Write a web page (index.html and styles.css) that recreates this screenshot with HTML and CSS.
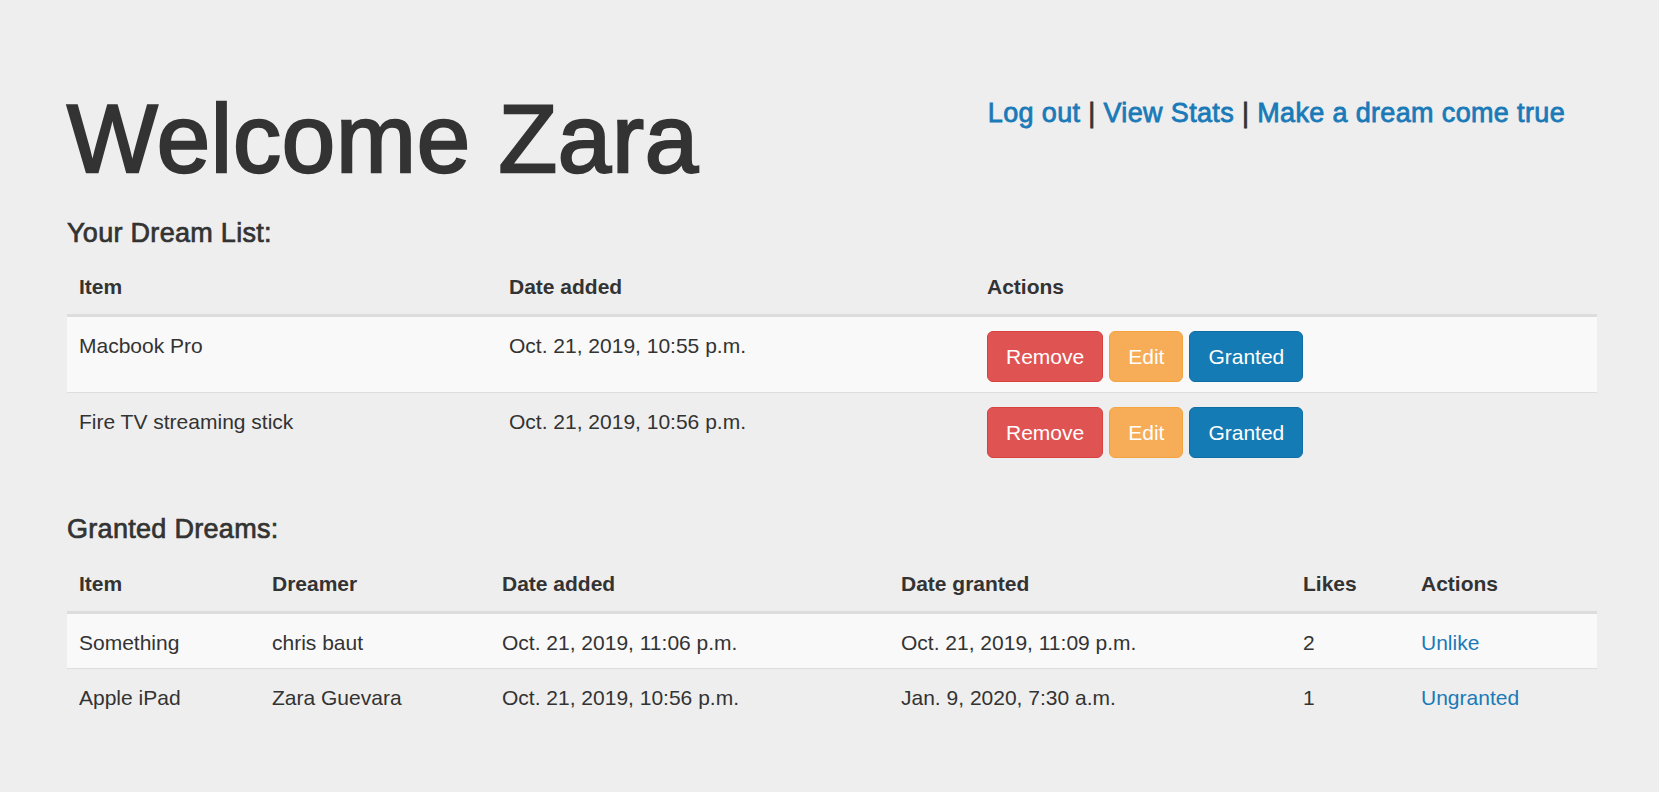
FILE: index.html
```html
<!DOCTYPE html>
<html lang="en">
<head>
<meta charset="utf-8">
<title>Dreams</title>
<link rel="stylesheet" href="styles.css">
</head>
<body>
<div class="page">
  <header class="top">
    <h1 class="title">Welcome Zara</h1>
    <nav class="links">
      <a href="#">Log out</a> <span class="sep">|</span> <a href="#">View Stats</a> <span class="sep">|</span> <a href="#">Make a dream come true</a>
    </nav>
  </header>

  <h4 class="section-title">Your Dream List:</h4>
  <table class="table">
    <colgroup>
      <col class="w-430">
      <col class="w-478">
      <col>
    </colgroup>
    <thead>
      <tr><th>Item</th><th>Date added</th><th>Actions</th></tr>
    </thead>
    <tbody>
      <tr>
        <td>Macbook Pro</td>
        <td>Oct. 21, 2019, 10:55 p.m.</td>
        <td>
          <div class="actions">
            <a href="#" class="btn btn-danger">Remove</a>
            <a href="#" class="btn btn-warning">Edit</a>
            <a href="#" class="btn btn-primary">Granted</a>
          </div>
        </td>
      </tr>
      <tr>
        <td>Fire TV streaming stick</td>
        <td>Oct. 21, 2019, 10:56 p.m.</td>
        <td>
          <div class="actions">
            <a href="#" class="btn btn-danger">Remove</a>
            <a href="#" class="btn btn-warning">Edit</a>
            <a href="#" class="btn btn-primary">Granted</a>
          </div>
        </td>
      </tr>
    </tbody>
  </table>

  <h4 class="section-title section-title-next">Granted Dreams:</h4>
  <table class="table">
    <colgroup>
      <col class="w-193">
      <col class="w-230">
      <col class="w-399">
      <col class="w-402">
      <col class="w-118">
      <col>
    </colgroup>
    <thead>
      <tr><th>Item</th><th>Dreamer</th><th>Date added</th><th>Date granted</th><th>Likes</th><th>Actions</th></tr>
    </thead>
    <tbody>
      <tr>
        <td>Something</td>
        <td>chris baut</td>
        <td>Oct. 21, 2019, 11:06 p.m.</td>
        <td>Oct. 21, 2019, 11:09 p.m.</td>
        <td>2</td>
        <td><a href="#" class="link">Unlike</a></td>
      </tr>
      <tr>
        <td>Apple iPad</td>
        <td>Zara Guevara</td>
        <td>Oct. 21, 2019, 10:56 p.m.</td>
        <td>Jan. 9, 2020, 7:30 a.m.</td>
        <td>1</td>
        <td><a href="#" class="link">Ungranted</a></td>
      </tr>
    </tbody>
  </table>
</div>
</body>
</html>
```

FILE: styles.css
```css
* {
  box-sizing: border-box;
}

html,
body {
  margin: 0;
  background: #eeeeee;
}

body {
  font-family: "Liberation Sans", Arial, Helvetica, sans-serif;
  font-size: 21px;
  line-height: 30px;
  color: #333333;
}

a {
  color: #1a7ab8;
  text-decoration: none;
}

.page {
  padding: 86px 62px 40px 67px;
}

.top {
  display: flex;
  justify-content: space-between;
  align-items: flex-start;
}

.title {
  margin: 0;
  font-size: 96px;
  line-height: 105.6px;
  font-weight: normal;
  letter-spacing: 0.8px;
  -webkit-text-stroke: 2.4px #333333;
  color: #333333;
}

.links {
  margin-top: 13px;
  margin-right: 32px;
  font-size: 27px;
  line-height: 29.7px;
  letter-spacing: 0.35px;
  white-space: nowrap;
}

.links a {
  -webkit-text-stroke: 0.8px #1a7ab8;
}

.links .sep {
  color: #333333;
  -webkit-text-stroke: 0.8px #333333;
}

.section-title {
  margin: 27px 0 11px;
  font-size: 27px;
  line-height: 29.7px;
  font-weight: normal;
  letter-spacing: 0.3px;
  -webkit-text-stroke: 0.7px #333333;
}

.section-title-next {
  margin-top: 47px;
}

.table {
  width: 100%;
  border-collapse: collapse;
  table-layout: fixed;
  margin-bottom: 30px;
}

.w-430 { width: 430px; }
.w-478 { width: 478px; }
.w-193 { width: 193px; }
.w-230 { width: 230px; }
.w-399 { width: 399px; }
.w-402 { width: 402px; }
.w-118 { width: 118px; }

.table th,
.table td {
  text-align: left;
  vertical-align: top;
  line-height: 30px;
}

.table th {
  padding: 13px 12px 12px;
  font-weight: bold;
  border-bottom: 3px solid #dddddd;
}

.table td {
  padding: 14px 12px 10px;
  border-top: 1px solid #dddddd;
}

.table tbody tr:nth-child(odd) {
  background: #f9f9f9;
}

.actions {
  display: flex;
  gap: 6px;
}

.btn {
  display: inline-block;
  font-size: 21px;
  line-height: 30px;
  padding: 10px 18px 9px;
  border: 1px solid transparent;
  border-radius: 6px;
  color: #ffffff;
  text-align: center;
  white-space: nowrap;
}

.btn-danger {
  background: #e05353;
  border-color: #d9403e;
}

.btn-warning {
  background: #f7ac57;
  border-color: #f4a43f;
}

.btn-primary {
  background: #147bb5;
  border-color: #106ea7;
}

.link {
  color: #1a7ab8;
}
```
